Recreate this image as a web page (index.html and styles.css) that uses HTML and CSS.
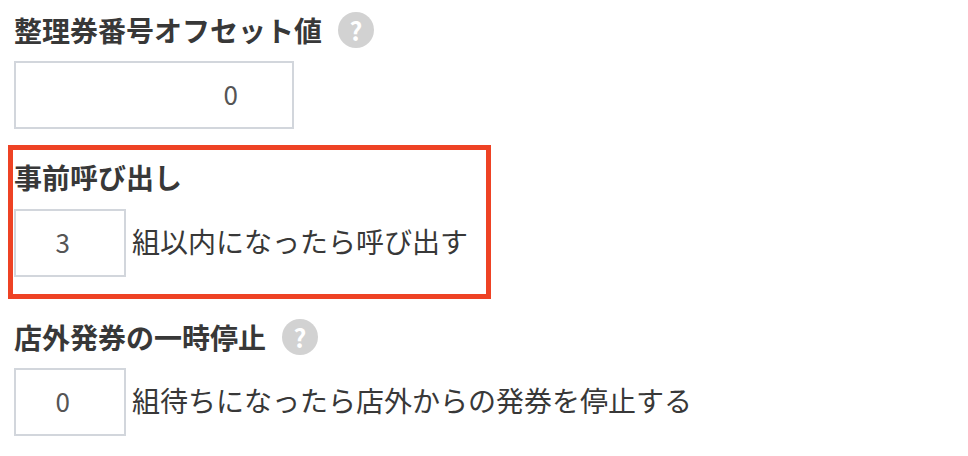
FILE: index.html
```html
<!DOCTYPE html>
<html lang="ja">
<head>
  <meta charset="UTF-8">
  <meta name="viewport" content="width=device-width, initial-scale=1.0">
  <title>整理券設定</title>
  <link rel="stylesheet" href="styles.css">
</head>
<body>
  <div class="field">
    <div class="field-title">
      <span>整理券番号オフセット値</span>
      <span class="help">?</span>
    </div>
    <input class="num-input wide" type="text" value="0">
  </div>

  <div class="field highlight">
    <div class="field-title">
      <span>事前呼び出し</span>
    </div>
    <div class="field-row">
      <input class="num-input" type="text" value="3">
      <span>組以内になったら呼び出す</span>
    </div>
  </div>

  <div class="field last">
    <div class="field-title">
      <span>店外発券の一時停止</span>
      <span class="help">?</span>
    </div>
    <div class="field-row">
      <input class="num-input" type="text" value="0">
      <span>組待ちになったら店外からの発券を停止する</span>
    </div>
  </div>
</body>
</html>
```

FILE: styles.css
```css
body {
  margin: 0;
  padding: 10px 0 0 14px;
  background-color: #fff;
  color: #383838;
  font-family: "Noto Sans CJK JP", "Noto Sans", sans-serif;
  font-size: 28px;
  line-height: 40px;
}

.field-title {
  display: flex;
  align-items: center;
  height: 40px;
  margin-bottom: 11px;
  font-size: 28px;
  font-weight: 700;
}

.help {
  width: 36px;
  height: 36px;
  margin-left: 16px;
  border-radius: 50%;
  background-color: #d2d2d2;
  color: #fff;
  font-size: 25px;
  font-weight: 700;
  line-height: 36px;
  text-align: center;
}

.field-row {
  display: flex;
  align-items: center;
}

.field-row span {
  margin-left: 6px;
  padding-bottom: 4px;
}

.num-input {
  display: block;
  box-sizing: border-box;
  width: 112px;
  height: 68px;
  padding: 0 54px 3px 0;
  border: 2px solid #d2d6dc;
  border-radius: 0;
  color: #555;
  font-family: "Noto Sans CJK JP", sans-serif;
  font-size: 26px;
  text-align: right;
  outline: none;
}

.num-input.wide {
  width: 280px;
}

.highlight {
  width: 483px;
  box-sizing: border-box;
  margin: 16px 0 0 -6px;
  padding: 7px 1px 17px 1px;
  border: 5px solid #ee4224;
}

.highlight .field-title {
  margin-bottom: 12px;
}

.last {
  margin-top: 18px;
}
```
